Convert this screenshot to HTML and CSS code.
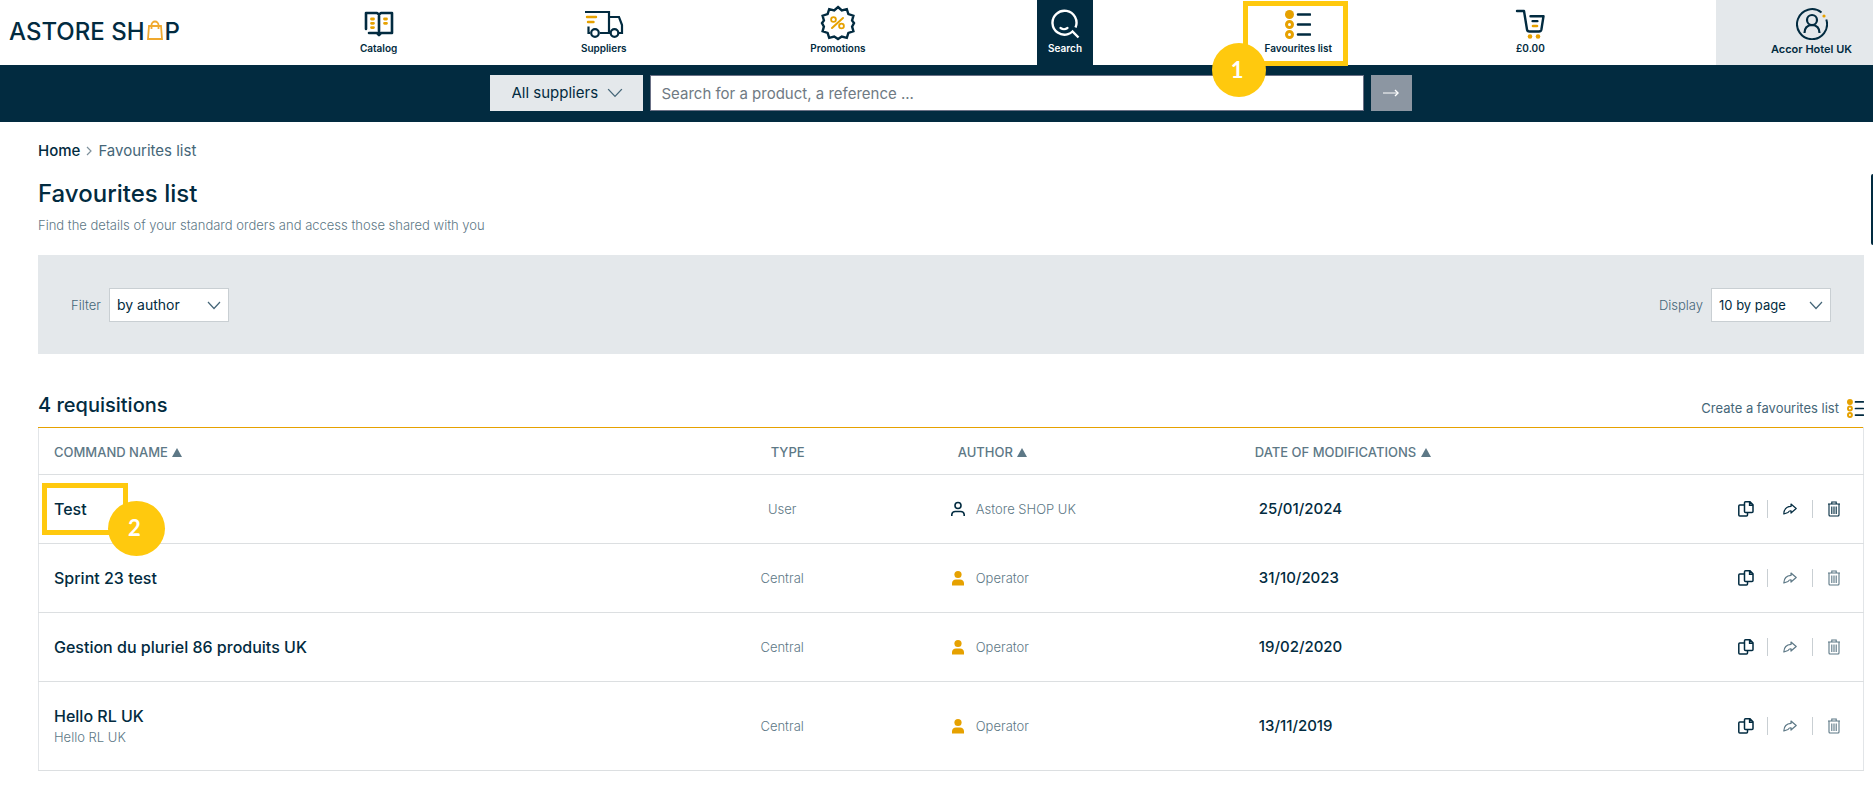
FILE: index.html
```html
<!DOCTYPE html>
<html lang="en">
	<head>
		<meta charset="UTF-8" />
		<title>Favourites list - Astore Shop</title>
		<link rel="stylesheet" href="styles.css">
	</head>
	<body>
		<!-- icons used several times -->
		<svg class="sprite" width="0" height="0" aria-hidden="true">
			<symbol id="icon-list" viewBox="0 0 26 29">
				<circle cx="4.500" cy="4.500" r="4.500" fill="#e6a100"/>
				<circle cx="4.500" cy="14.500" r="3" fill="none" stroke="#e6a100" stroke-width="3"/>
				<circle cx="4.500" cy="24.500" r="3" fill="none" stroke="#e6a100" stroke-width="3"/>
				<path d="M13 4.500h12M13 14.500h12M13 24.500h12" stroke="#022b40" stroke-width="2.600" stroke-linecap="round"/>
			</symbol>
			<symbol id="icon-user" viewBox="0 0 16 16">
				<circle cx="8" cy="4.500" r="3" fill="none" stroke="#022b40" stroke-width="1.600"/>
				<path d="M1.800 15v-1.500a3.500 3.500 0 0 1 3.500-3h5.400a3.500 3.500 0 0 1 3.500 3V15" fill="none" stroke="#022b40" stroke-width="1.600"/>
			</symbol>
			<symbol id="icon-operator" viewBox="0 0 16 16">
				<circle cx="8" cy="4.500" r="3.600" fill="#e6a100"/>
				<path d="M2 15.500v-2.500a4 4 0 0 1 4-3.500h4a4 4 0 0 1 4 3.500v2.500z" fill="#e6a100"/>
			</symbol>
			<symbol id="icon-copy" viewBox="0 0 16 16">
				<path d="M7.500.8h4.500l3 3v6.700a1 1 0 0 1-1 1H7.500a1 1 0 0 1-1-1V1.800a1 1 0 0 1 1-1zM11.600 1v3.200H15M6.300 4H1.800a1 1 0 0 0-1 1v9a1 1 0 0 0 1 1H8.500a1 1 0 0 0 1-1v-2" fill="none" stroke="currentColor" stroke-width="1.500"/>
			</symbol>
			<symbol id="icon-share" viewBox="0 0 14 12">
				<path d="M8 1l5.200 4.500L8 10V7.800C6.500 7.500 5.800 8.300 5 9.500L.8 11C1 6.500 3.500 3.600 8 3.400z" fill="none" stroke="currentColor" stroke-width="1.200" stroke-linejoin="round"/>
			</symbol>
			<symbol id="icon-trash" viewBox="0 0 14 16">
				<path d="M1 3h12M4.800 2.800V1h4.400v1.800M2 3.200v10.800a1 1 0 0 0 1 1h8a1 1 0 0 0 1-1V3.200M4.800 5.500v7.500M7 5.500v7.500M9.200 5.500v7.500" fill="none" stroke="currentColor" stroke-width="1.100"/>
			</symbol>
		</svg>

		<header class="header">
			<a class="logo" href="#" aria-label="Astore Shop">ASTORE SH<svg class="bag" width="16" height="20" viewBox="0 0 16 20"><path d="M2 6h12l1 13H1zM4.500 9V5a3.500 3.500 0 0 1 7 0v4" fill="none" stroke="#f0a92e" stroke-width="1.800"/></svg>P</a>
			<nav class="nav">
				<a class="nav-item" href="#">
					<svg width="30" height="26" viewBox="0 0 30 26">
						<path d="M2 18V2h11l2 1.500L17 2h11v20H17l-2 2-2-2H5M15 3.500V23" fill="none" stroke="#022b40" stroke-width="2.600" stroke-linejoin="round" stroke-linecap="round"/>
						<path d="M7.500 8h2M7.500 12.300h2M7.500 16.600h2M20.500 8h2M20.500 12.300h2" stroke="#e6a100" stroke-width="2.800" stroke-linecap="round"/>
					</svg>
					<span>Catalog</span>
				</a>
				<a class="nav-item" href="#">
					<svg width="40" height="28" viewBox="0 0 40 28">
						<path d="M1 2h24v21H16M25 7h10l3 8v8H35M6 23H4.500v-6.500M25 23h1" fill="none" stroke="#022b40" stroke-width="2.200"/>
						<circle cx="11" cy="23" r="3.800" fill="none" stroke="#022b40" stroke-width="2.200"/>
						<circle cx="30.500" cy="23" r="3.800" fill="none" stroke="#022b40" stroke-width="2.200"/>
						<path d="M3 7h9M4 12h5.500" stroke="#e6a100" stroke-width="2.400" stroke-linecap="round"/>
					</svg>
					<span>Suppliers</span>
				</a>
				<a class="nav-item" href="#">
					<svg width="36" height="36" viewBox="0 0 36 36">
						<path d="M18 2l3.800 3.400 5-1.300 1.600 5 5 1.600-1.300 4.700L34 18l-1.900 3.600 1.300 4.700-5 1.600-1.600 5-5-1.300L18 34l-3.800-2.400-5 1.300-1.600-5-5-1.600 1.300-4.700L2 18l1.900-2.600-1.300-4.700 5-1.600 1.600-5 5 1.300z" fill="none" stroke="#022b40" stroke-width="2.400"/>
						<path d="M12 23L23 13" stroke="#e6a100" stroke-width="2" stroke-linecap="round"/>
						<circle cx="13.500" cy="14.500" r="2.400" fill="none" stroke="#e6a100" stroke-width="1.800"/>
						<circle cx="21.500" cy="21" r="2.400" fill="none" stroke="#e6a100" stroke-width="1.800"/>
					</svg>
					<span>Promotions</span>
				</a>
				<a class="nav-item active" href="#">
					<svg width="30" height="30" viewBox="0 0 30 30">
						<path d="M25.500 18.500A12 12 0 1 0 18 25.200q2.500-.7 4.500-2.700L28.500 28.500" fill="none" stroke="#fff" stroke-width="2.400"/>
						<path d="M10.500 19q3.500 2.500 7 0" fill="none" stroke="#fff" stroke-width="2.200" stroke-linecap="round"/>
					</svg>
					<span>Search</span>
				</a>
				<a class="nav-item" href="#">
					<svg width="26" height="29"><use href="#icon-list"/></svg>
					<span>Favourites list</span>
					<i class="mark mark-one"></i>
					<b class="step step-one">1</b>
				</a>
				<a class="nav-item" href="#">
					<svg width="30" height="30" viewBox="0 0 30 30">
						<path d="M2 2h7l3 18.500q.3 2 2.500 2H24q2 0 2.400-2L28.500 7.300H15.500" fill="none" stroke="#022b40" stroke-width="2.400" stroke-linecap="round" stroke-linejoin="round"/>
						<path d="M17.500 12.200h5" stroke="#022b40" stroke-width="2.200" stroke-linecap="round"/>
						<path d="M18 17h4" stroke="#e6a100" stroke-width="2.600" stroke-linecap="round"/>
						<circle cx="15" cy="27.500" r="2.300" fill="#e6a100"/>
						<circle cx="23" cy="27.500" r="2.300" fill="#e6a100"/>
					</svg>
					<span>£0.00</span>
				</a>
			</nav>
			<a class="account" href="#">
				<svg width="32" height="32" viewBox="0 0 32 32">
					<path d="M30.300 11.500A15 15 0 1 1 25.500 4.500" fill="none" stroke="#022b40" stroke-width="2"/>
					<circle cx="28" cy="8" r="1.600" fill="#e6a100"/>
					<circle cx="16" cy="12" r="5" fill="none" stroke="#022b40" stroke-width="2.200"/>
					<path d="M8.500 25q0-7.500 7.500-8 7.500.5 7.500 8" fill="none" stroke="#022b40" stroke-width="2.200"/>
				</svg>
				<span>Accor Hotel UK</span>
			</a>
		</header>

		<form class="search" action="">
			<select class="suppliers" aria-label="Suppliers">
				<option>All suppliers</option>
			</select>
			<input type="text" class="query" aria-label="Search" placeholder="Search for a product, a reference ..." />
			<button type="button" class="go" aria-label="Search">
				<svg width="18" height="10" viewBox="0 0 18 10"><path d="M1 5h14" stroke="#fff" stroke-width="1"/><path d="M13 2l3 3-3 3" fill="none" stroke="#fff" stroke-width="1.400"/></svg>
			</button>
		</form>

		<main class="content">
			<div class="breadcrumb">
				<a href="#">Home</a>
				<svg width="6" height="10" viewBox="0 0 6 10"><path d="M1 1l4 4-4 4" fill="none" stroke="#7f919c" stroke-width="1.200"/></svg>
				<span>Favourites list</span>
			</div>
			<h1>Favourites list</h1>
			<p class="intro">Find the details of your standard orders and access those shared with you</p>

			<div class="filters">
				<div class="field">
					<label for="author">Filter</label>
					<select id="author">
						<option>by author</option>
					</select>
				</div>
				<div class="field">
					<label for="display">Display</label>
					<select id="display">
						<option>10 by page</option>
					</select>
				</div>
			</div>

			<div class="list-head">
				<h2>4 requisitions</h2>
				<a class="create" href="#">Create a favourites list <svg width="17" height="19"><use href="#icon-list"/></svg></a>
			</div>

			<table class="list">
				<thead>
					<tr>
						<th class="name">COMMAND NAME <i class="sort"></i></th>
						<th class="type">TYPE</th>
						<th class="author">AUTHOR <i class="sort"></i></th>
						<th class="date">DATE OF MODIFICATIONS <i class="sort"></i></th>
						<th class="actions"></th>
					</tr>
				</thead>
				<tbody>
					<tr>
						<td class="name"><div class="target"><a href="#">Test</a><i class="mark mark-two"></i><b class="step step-two">2</b></div></td>
						<td class="type">User</td>
						<td class="author"><div><svg width="16" height="16"><use href="#icon-user"/></svg>Astore SHOP UK</div></td>
						<td class="date">25/01/2024</td>
						<td class="actions"><div>
							<button type="button" aria-label="Copy"><svg width="16" height="16"><use href="#icon-copy"/></svg></button>
							<button type="button" aria-label="Share"><svg width="14" height="12"><use href="#icon-share"/></svg></button>
							<button type="button" aria-label="Delete"><svg width="14" height="16"><use href="#icon-trash"/></svg></button>
						</div></td>
					</tr>
					<tr>
						<td class="name"><a href="#">Sprint 23 test</a></td>
						<td class="type">Central</td>
						<td class="author"><div><svg width="16" height="16"><use href="#icon-operator"/></svg>Operator</div></td>
						<td class="date">31/10/2023</td>
						<td class="actions"><div>
							<button type="button" aria-label="Copy"><svg width="16" height="16"><use href="#icon-copy"/></svg></button>
							<button type="button" aria-label="Share" disabled><svg width="14" height="12"><use href="#icon-share"/></svg></button>
							<button type="button" aria-label="Delete" disabled><svg width="14" height="16"><use href="#icon-trash"/></svg></button>
						</div></td>
					</tr>
					<tr>
						<td class="name"><a href="#">Gestion du pluriel 86 produits UK</a></td>
						<td class="type">Central</td>
						<td class="author"><div><svg width="16" height="16"><use href="#icon-operator"/></svg>Operator</div></td>
						<td class="date">19/02/2020</td>
						<td class="actions"><div>
							<button type="button" aria-label="Copy"><svg width="16" height="16"><use href="#icon-copy"/></svg></button>
							<button type="button" aria-label="Share" disabled><svg width="14" height="12"><use href="#icon-share"/></svg></button>
							<button type="button" aria-label="Delete" disabled><svg width="14" height="16"><use href="#icon-trash"/></svg></button>
						</div></td>
					</tr>
					<tr>
						<td class="name"><a href="#">Hello RL UK</a><small>Hello RL UK</small></td>
						<td class="type">Central</td>
						<td class="author"><div><svg width="16" height="16"><use href="#icon-operator"/></svg>Operator</div></td>
						<td class="date">13/11/2019</td>
						<td class="actions"><div>
							<button type="button" aria-label="Copy"><svg width="16" height="16"><use href="#icon-copy"/></svg></button>
							<button type="button" aria-label="Share" disabled><svg width="14" height="12"><use href="#icon-share"/></svg></button>
							<button type="button" aria-label="Delete" disabled><svg width="14" height="16"><use href="#icon-trash"/></svg></button>
						</div></td>
					</tr>
				</tbody>
			</table>
		</main>
		<div class="side-tab"></div>
	</body>
</html>
```
FILE: styles.css
```css
*{
	box-sizing: border-box;
}
body{
	margin: 0;
	font: 15px/20px Inter, "Liberation Sans", sans-serif;
	color: #022b40;
	background: #fff;
}
a{
	color: inherit;
	text-decoration: none;
}
.sprite{
	display: none;
}

/* header */
.header{
	display: flex;
	height: 65px;
}
.logo{
	display: flex;
	align-items: baseline;
	width: 266px;
	padding: 16px 0 0 9px;
	font: 500 24px/32px Inter, sans-serif;
	white-space: pre;
}
.logo .bag{
	margin: 0 2px;
}
.nav{
	flex: 1;
	display: grid;
	grid-template-columns: 225fr 225fr 243fr 211fr 255fr 209fr;
	justify-items: center;
	margin-right: 81px;
}
.nav-item,
.account{
	position: relative;
	display: flex;
	flex-direction: column;
	align-items: center;
	justify-content: space-between;
	height: 65px;
	padding: 7px 0 10px;
	font-size: 10px;
	line-height: 14px;
	font-weight: 600;
}
.nav-item svg{
	margin: auto 0;
}
.nav-item.active{
	width: 56px;
	background: #022b40;
	color: #fff;
}
.nav-item:nth-child(3){
	padding-top: 4px;
}
.account{
	width: 157px;
	padding: 8px 0 9px 34px;
	font-size: 11px;
	background: #e4e8eb;
}

/* search bar */
.search{
	display: flex;
	justify-content: center;
	gap: 7px;
	padding: 10px 0 11px 28px;
	background: #022b40;
}
select{
	appearance: none;
	border: 1px solid #c9cfd3;
	border-radius: 0;
	padding: 0 7px;
	height: 34px;
	width: 120px;
	font: 14px/20px Inter, sans-serif;
	color: #022b40;
	background: #fff url("data:image/svg+xml,%3Csvg xmlns='http://www.w3.org/2000/svg' width='14' height='9'%3E%3Cpath d='M1 1l6 6.500L13 1' fill='none' stroke='%23456678' stroke-width='1.200'/%3E%3C/svg%3E") no-repeat right 7px center;
}
.search .suppliers{
	width: 153px;
	height: 36px;
	padding-left: 22px;
	border: 0;
	font-size: 15px;
	background-color: #e4e8eb;
	background-size: 16px 10px;
	background-position: right 20px center;
}
.query{
	width: 714px;
	height: 36px;
	padding: 0 11px;
	border: 1px solid #6b7186;
	font: 15px/20px Inter, sans-serif;
}
.query::placeholder{
	color: #6f7a83;
	opacity: 1;
}
.go{
	display: flex;
	align-items: center;
	justify-content: center;
	width: 41px;
	height: 36px;
	border: 0;
	background: #8c96a2;
}

/* page */
.content{
	padding: 19px 9px 0 38px;
}
.breadcrumb{
	display: flex;
	align-items: center;
	gap: 6px;
	color: #456678;
}
.breadcrumb a{
	font-weight: 500;
	color: #022b40;
}
h1{
	margin: 18px 0 0;
	font-size: 24px;
	line-height: 30px;
	font-weight: 500;
}
.intro{
	margin: 6px 0 20px;
	font-size: 13px;
	font-weight: 300;
	color: #5d7886;
}
.filters{
	display: flex;
	align-items: center;
	justify-content: space-between;
	padding: 33px 33px 32px;
	background: #e4e8eb;
}
.field{
	display: flex;
	align-items: center;
	gap: 8px;
	font-size: 13px;
	font-weight: 300;
	color: #456678;
}
#display{
	font-size: 13px;
}
.list-head{
	display: flex;
	justify-content: space-between;
	align-items: flex-end;
	padding: 36px 0 7px;
}
h2{
	margin: 0;
	font-size: 20px;
	line-height: 30px;
	font-weight: 500;
}
.create{
	display: flex;
	align-items: center;
	gap: 8px;
	padding-bottom: 2px;
	font-size: 13px;
	color: #456678;
}

/* list */
.list{
	width: 100%;
	table-layout: fixed;
	border-collapse: collapse;
	border: 1px solid #e2e5e8;
	border-top-color: #e6a100;
}
.list th,
.list td{
	height: 69px;
	padding: 0;
	text-align: left;
	border-bottom: 1px solid #dcdfe1;
}
.list th{
	height: 47px;
	padding-top: 2px;
	font-size: 13px;
	font-weight: 500;
	color: #5d7886;
}
.list tr:last-child td{
	height: 89px;
}
.list .name{
	width: 36%;
	padding-left: 15px;
}
.list .type{
	width: 9%;
	padding-left: 9px;
	text-align: center;
}
.list th.type{
	padding-left: 20px;
}
.list .author{
	width: 20%;
	padding-left: 90px;
}
.list th.author{
	padding-left: 98px;
}
.list .date{
	width: 18%;
	padding-left: 34px;
}
.list th.date{
	padding-left: 30px;
}
.list .actions{
	padding-right: 22px;
}
.sort{
	display: inline-block;
	margin-left: 1px;
	border: 5px solid transparent;
	border-top: 0;
	border-bottom: 9px solid #5d7886;
}
td.name a{
	font-size: 16px;
	font-weight: 500;
}
td.name small{
	display: block;
	font-size: 13px;
	font-weight: 300;
	color: #5d7886;
}
td.type,
td.author{
	font-size: 13px;
	font-weight: 300;
	color: #5d7886;
}
td.author div{
	display: flex;
	align-items: center;
	gap: 10px;
}
td.date{
	font-weight: 500;
}
.actions div{
	display: flex;
	justify-content: flex-end;
	align-items: center;
}
.actions button{
	display: flex;
	align-items: center;
	justify-content: center;
	width: 45px;
	height: 18px;
	padding: 0;
	border: 0;
	border-left: 1px solid #c9cfd3;
	background: none;
	color: #022b40;
}
.actions button:first-child{
	width: 42px;
	border-left: 0;
}
.actions button:last-child{
	width: 29px;
	justify-content: flex-end;
}
.actions button:disabled{
	color: #5d7886;
}

/* tutorial marks */
.mark{
	position: absolute;
	border: 5px solid #ffc90e;
}
.step{
	position: absolute;
	display: flex;
	align-items: center;
	justify-content: center;
	width: 54px;
	height: 54px;
	padding-right: 4px;
	border-radius: 50%;
	background: #ffc90e;
	color: #fff;
	font: bold 22px/24px Lato, sans-serif;
}
.target{
	position: relative;
}
.mark-one{
	top: 1px;
	left: 50%;
	width: 105px;
	height: 65px;
	margin-left: -55px;
}
.step-one{
	top: 43px;
	left: 50%;
	margin-left: -86px;
}
.mark-two{
	top: -16px;
	left: -12px;
	width: 86px;
	height: 52px;
}
.step-two{
	top: 2px;
	left: 54px;
	width: 57px;
	height: 55px;
}
.side-tab{
	position: absolute;
	top: 174px;
	right: 0;
	width: 2px;
	height: 71px;
	border-radius: 2px 0 0 2px;
	background: #022b40;
}
```
